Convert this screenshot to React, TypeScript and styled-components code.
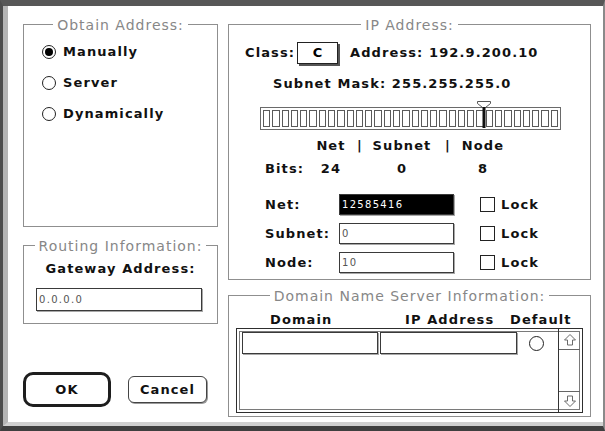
import styled, { createGlobalStyle } from 'styled-components'

const GlobalStyle = createGlobalStyle`
	html, body {
		margin: 0;
		padding: 0;
		background: #fff;
	}
	body {
		font-family: "DejaVu Sans", sans-serif;
	}
`

const Window = styled.div`
	width: 605px;
	height: 431px;
	box-sizing: border-box;
	border-top: 6px solid #575757;
	border-left: 3px solid #4d4d4d;
	border-right: 2px solid #8a8a8a;
	border-bottom: 5px solid #3f3f3f;
	background: #fff;
`
const Pane = styled.div`
	height: 100%;
	box-sizing: border-box;
	border-left: 5px solid #b5b5b5;
	border-bottom: 4px solid #d0d0d0;
	padding: 18px 10px 0 15px;
	display: grid;
	grid-template-columns: 195px 363px;
	column-gap: 10px;
	align-items: start;
`
const Column = styled.div`
	display: flex;
	flex-direction: column;
`
const Group = styled.div<{ $h: number; $gap?: number }>`
	box-sizing: border-box;
	height: ${p => p.$h}px;
	margin-top: ${p => p.$gap ?? 0}px;
	border: 1px solid #8f8f8f;
	display: flex;
	flex-direction: column;
`
const Legend = styled.div`
	align-self: center;
	margin-top: -8px;
	padding: 0 4px;
	background: #fff;
	font: 14px/16px "DejaVu Sans", sans-serif;
	letter-spacing: 1px;
	color: #878787;
`
const Label = styled.span`
	font: bold 13px/16px "DejaVu Sans", sans-serif;
	letter-spacing: 1.1px;
	color: #111;
	white-space: nowrap;
`

/* obtain address */
const RadioList = styled.div`
	display: flex;
	flex-direction: column;
	margin-top: 3px;
	padding-left: 18px;
`
const RadioRow = styled.label`
	display: flex;
	align-items: center;
	gap: 7px;
	height: 31px;
`
const Radio = styled.span<{ $checked?: boolean }>`
	position: relative;
	box-sizing: border-box;
	width: 14px;
	height: 14px;
	border: 1px solid #222;
	border-radius: 50%;
	background: #fff;
	flex: none;
	&::after {
		content: '';
		display: ${p => (p.$checked ? 'block' : 'none')};
		position: absolute;
		left: 2px;
		top: 2px;
		width: 8px;
		height: 8px;
		border-radius: 50%;
		background: #000;
	}
`

/* routing */
const Gateway = styled(Label)`
	align-self: center;
	margin-top: 7px;
`
const Field = styled.div<{ $w: number; $h?: number; $dark?: boolean }>`
	box-sizing: border-box;
	width: ${p => p.$w}px;
	height: ${p => p.$h ?? 21}px;
	border: 1px solid #3a3a3a;
	box-shadow: 1px 1px 0 #a8a8a8;
	background: ${p => (p.$dark ? '#000' : '#fff')};
	color: ${p => (p.$dark ? '#fff' : '#555')};
	font: 10px/19px "DejaVu Sans", sans-serif;
	letter-spacing: 1.3px;
	padding-left: 2px;
`
const GatewayField = styled(Field)`
	margin: 11px 0 0 12px;
	line-height: 21px;
`

/* buttons */
const ButtonRow = styled.div`
	display: flex;
	align-items: center;
	gap: 17px;
	margin-top: 48px;
`
const Button = styled.button<{ $default?: boolean }>`
	box-sizing: border-box;
	display: flex;
	align-items: center;
	justify-content: center;
	padding: 0;
	background: #fff;
	font: bold 13px/16px "DejaVu Sans", sans-serif;
	letter-spacing: 1.1px;
	color: #111;
	width: ${p => (p.$default ? 88 : 79)}px;
	height: ${p => (p.$default ? 35 : 27)}px;
	border: ${p => (p.$default ? '3px solid #1e1e1e' : '1px solid #444')};
	border-radius: ${p => (p.$default ? 10 : 6)}px;
	box-shadow: ${p => (p.$default ? 'none' : '1px 1px 0 #9a9a9a')};
`

/* ip address */
const ClassRow = styled.div`
	display: flex;
	align-items: center;
	margin-top: 9px;
	padding-left: 16px;
	height: 22px;
`
const ClassBox = styled.div`
	box-sizing: border-box;
	width: 41px;
	height: 22px;
	margin: 0 12px 0 2px;
	border: 1px solid #222;
	box-shadow: 2px 2px 0 #555;
	display: flex;
	align-items: center;
	justify-content: center;
	font: bold 13px/16px "DejaVu Sans", sans-serif;
`
const MaskLine = styled(Label)`
	margin-top: 12px;
	padding-left: 44px;
`
const SliderWrap = styled.div`
	position: relative;
	margin: 15px 0 0 31px;
	width: 301px;
`
const Slider = styled.div`
	box-sizing: border-box;
	height: 23px;
	display: flex;
	border: 1px solid #6a6a6a;
	padding: 2px 1px;
`
const Cell = styled.div`
	flex: 1;
	margin: 0 1px;
	border: 1px solid #5a5a5a;
`
const Marker = styled.svg`
	position: absolute;
	left: 216px;
	top: -7px;
`
const BitsGrid = styled.div`
	display: grid;
	grid-template-columns: 44px 44px 14px 70px 22px 48px;
	row-gap: 7px;
	margin-top: 8px;
	padding-left: 36px;
	justify-items: center;
	& > span:first-child,
	& > span:nth-child(7) {
		justify-self: start;
	}
`
const FieldGrid = styled.div`
	display: grid;
	grid-template-columns: 74px 115px auto;
	grid-auto-rows: 21px;
	row-gap: 8px;
	margin-top: 17px;
	padding-left: 36px;
	align-items: center;
`
const Lock = styled.label`
	display: flex;
	align-items: center;
	gap: 6px;
	margin-left: 26px;
`
const Checkbox = styled.span`
	box-sizing: border-box;
	width: 15px;
	height: 15px;
	border: 1px solid #222;
	background: #fff;
`

/* dns */
const HeadRow = styled.div`
	display: grid;
	grid-template-columns: 135px 105px auto;
	margin-top: 8px;
	padding-left: 41px;
`
const ListBox = styled.div`
	box-sizing: border-box;
	height: 85px;
	margin: 0 7px;
	border: 1px solid #2e2e2e;
	box-shadow: inset 0 0 0 2px #fff, inset 0 0 0 3px #7a7a7a;
	display: flex;
`
const ListRows = styled.div`
	flex: 1;
	display: flex;
	align-items: flex-start;
	padding: 3px 0 0 5px;
	gap: 2px;
`
const DefaultRadio = styled(Radio)`
	width: 15px;
	height: 15px;
	margin: 4px 0 0 10px;
`
const Scrollbar = styled.div`
	width: 21px;
	border-left: 1px solid #333;
	display: flex;
	flex-direction: column;
	justify-content: space-between;
	padding: 2px 2px 2px 0;
`
const Arrow = styled.div<{ $down?: boolean }>`
	height: 18px;
	display: flex;
	align-items: center;
	justify-content: center;
	border-${p => (p.$down ? 'top' : 'bottom')}: 1px solid #666;
	svg {
		transform: ${p => (p.$down ? 'rotate(180deg)' : 'none')};
	}
`

const ArrowIcon = () => (
	<svg width="14" height="14" viewBox="0 0 14 14">
		<path d="M7 1.5 L12.5 7 L9.5 7 L9.5 12 L4.5 12 L4.5 7 L1.5 7 Z" fill="#fff" stroke="#6a6a6a" strokeWidth="1" />
	</svg>
)

const Row = ({ name, value, dark }: { name: string; value: string; dark?: boolean }) => (
	<>
		<Label>{name}</Label>
		<Field $w={115} $dark={dark}>
			{value}
		</Field>
		<Lock>
			<Checkbox />
			<Label>Lock</Label>
		</Lock>
	</>
)

const App = () => {
	const cells = Array.from({ length: 32 })
	const rows = [
		{ name: 'Net:', value: '12585416', dark: true },
		{ name: 'Subnet:', value: '0' },
		{ name: 'Node:', value: '10' },
	]

	return (
		<>
			<GlobalStyle />
			<Window>
				<Pane>
					<Column>
						<Group $h={203}>
							<Legend>Obtain Address:</Legend>
							<RadioList>
								<RadioRow>
									<Radio $checked />
									<Label>Manually</Label>
								</RadioRow>
								<RadioRow>
									<Radio />
									<Label>Server</Label>
								</RadioRow>
								<RadioRow>
									<Radio />
									<Label>Dynamically</Label>
								</RadioRow>
							</RadioList>
						</Group>
						<Group $h={79} $gap={18}>
							<Legend>Routing Information:</Legend>
							<Gateway>Gateway Address:</Gateway>
							<GatewayField $w={166} $h={23}>0.0.0.0</GatewayField>
						</Group>
						<ButtonRow>
							<Button $default>OK</Button>
							<Button>Cancel</Button>
						</ButtonRow>
					</Column>

					<Column>
						<Group $h={256}>
							<Legend>IP Address:</Legend>
							<ClassRow>
								<Label>Class:</Label>
								<ClassBox>C</ClassBox>
								<Label>Address: 192.9.200.10</Label>
							</ClassRow>
							<MaskLine>Subnet Mask: 255.255.255.0</MaskLine>
							<SliderWrap>
								<Slider>
									{cells.map((_, i) => (
										<Cell key={i} />
									))}
								</Slider>
								<Marker width="16" height="30" viewBox="0 0 16 30">
									<path d="M1.5 1.5 H14.5 V3.5 L9.5 7.5 H6.5 L1.5 3.5 Z" fill="#fff" stroke="#555" />
									<rect x="6.5" y="7" width="3" height="21" fill="#111" />
								</Marker>
							</SliderWrap>
							<BitsGrid>
								<span />
								<Label>Net</Label>
								<Label>|</Label>
								<Label>Subnet</Label>
								<Label>|</Label>
								<Label>Node</Label>
								<Label>Bits:</Label>
								<Label>24</Label>
								<span />
								<Label>0</Label>
								<span />
								<Label>8</Label>
							</BitsGrid>
							<FieldGrid>
								{rows.map(r => (
									<Row key={r.name} {...r} />
								))}
							</FieldGrid>
						</Group>

						<Group $h={122} $gap={15}>
							<Legend>Domain Name Server Information:</Legend>
							<HeadRow>
								<Label>Domain</Label>
								<Label>IP Address</Label>
								<Label>Default</Label>
							</HeadRow>
							<ListBox>
								<ListRows>
									<Field $w={136} $h={22} />
									<Field $w={137} $h={22} />
									<DefaultRadio />
								</ListRows>
								<Scrollbar>
									<Arrow>
										<ArrowIcon />
									</Arrow>
									<Arrow $down>
										<ArrowIcon />
									</Arrow>
								</Scrollbar>
							</ListBox>
						</Group>
					</Column>
				</Pane>
			</Window>
		</>
	)
}

export default App
